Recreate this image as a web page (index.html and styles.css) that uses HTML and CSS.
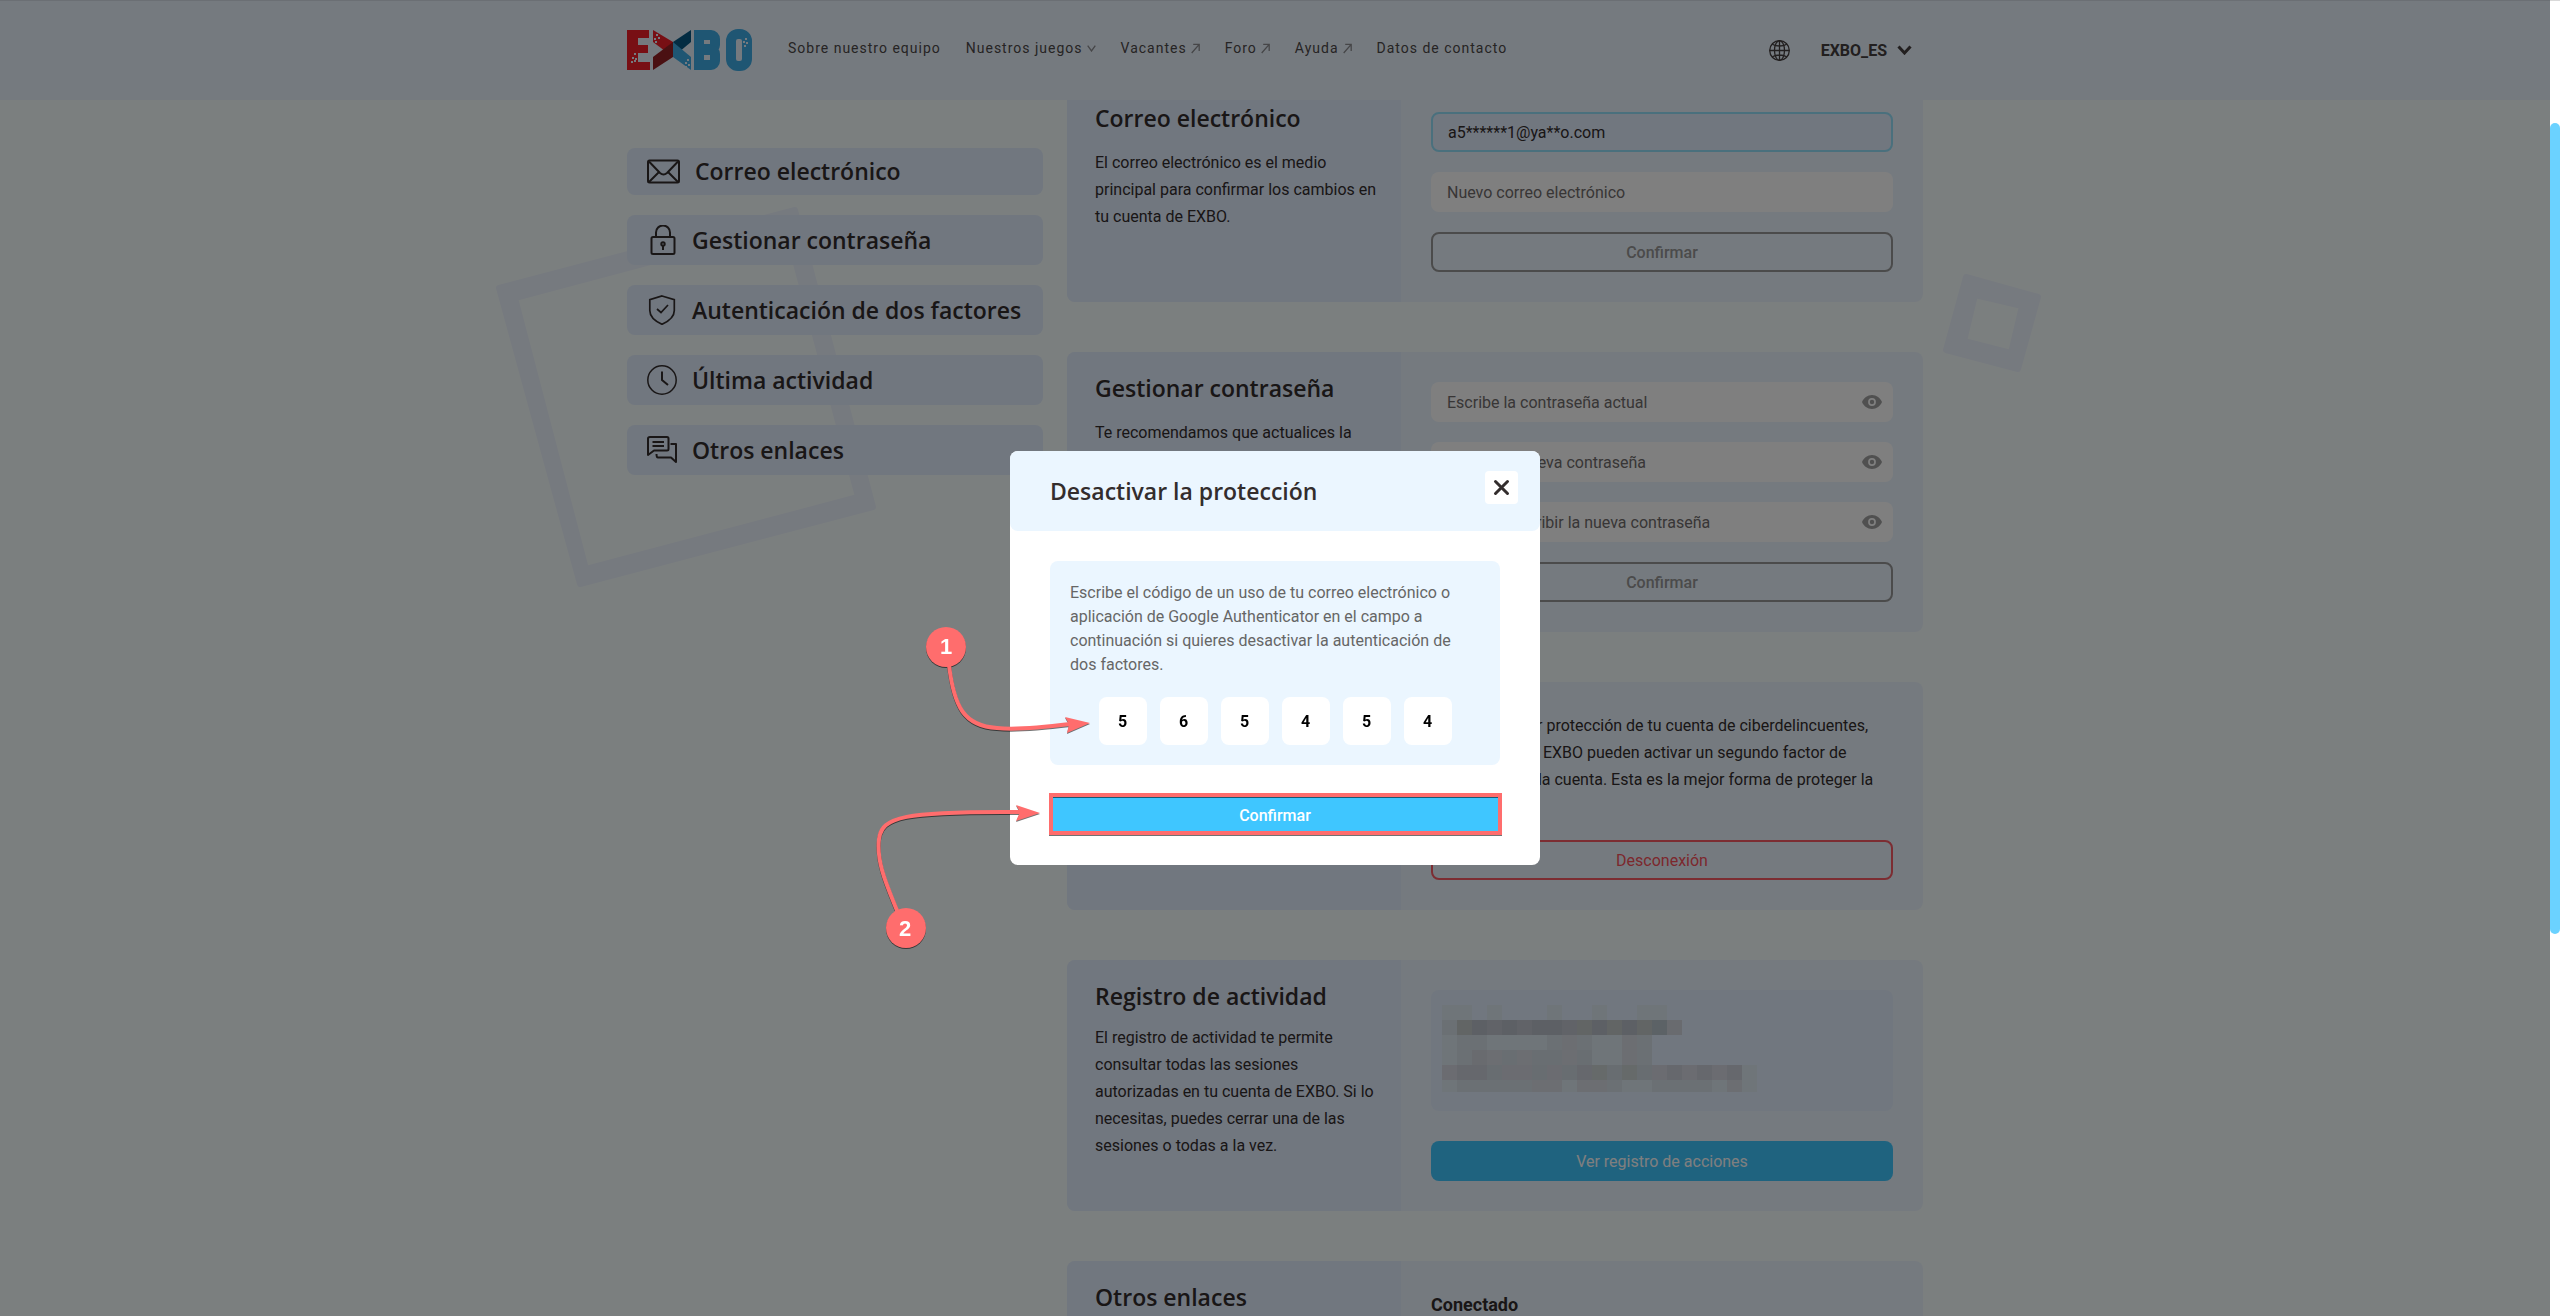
FILE: index.html
```html
<!DOCTYPE html>
<html lang="es">
<head>
<meta charset="utf-8">
<meta name="viewport" content="width=device-width, initial-scale=1">
<title>EXBO: configuración de la cuenta</title>
<link rel="stylesheet" href="styles.css">
</head>
<body>

<svg class="sprite" aria-hidden="true">
  <symbol id="ext" viewBox="0 0 9 11"><path d="M.7 10 8 1.6M2.2 1.4H8.2V8" fill="none" stroke="currentColor" stroke-width="1.3"/></symbol>
  <symbol id="eye" viewBox="0 0 20 14"><path fill-rule="evenodd" d="M10 0C5.500 0 1.700 2.900 0 7c1.700 4.100 5.500 7 10 7s8.300-2.900 10-7c-1.700-4.100-5.500-7-10-7Zm0 10.900A3.900 3.900 0 1 1 10 3.100a3.900 3.900 0 0 1 0 7.800Zm0-6.100a2.200 2.200 0 1 0 0 4.400 2.200 2.200 0 0 0 0-4.400Z" fill="currentColor"/></symbol>
</svg>

<header class="header">
  <div class="header-inner">
    <a class="logo" href="#" aria-label="EXBO">
      <svg width="125" height="42" viewBox="0 0 125 42">
        <g fill="#f01e28">
          <rect x="0" y="1" width="11" height="40"/><rect x="0" y="1" width="22" height="8"/><rect x="0" y="16" width="21" height="8"/><rect x="0" y="33" width="23" height="8"/>
          <path d="M26 1 46 13V28L26 13Z"/>
        </g>
        <path d="M64 1 46 13V28L64 13Z" fill="#065884"/>
        <path d="M26 41V28L46 13V28Z" fill="#942024"/>
        <path d="M64 41V28L46 13V28Z" fill="#3eace6"/>
        <rect x="72" y="6" width="16" height="14" rx="4" fill="none" stroke="#3eace6" stroke-width="10"/>
        <rect x="72" y="21" width="16" height="15" rx="4" fill="none" stroke="#3eace6" stroke-width="10"/>
        <rect x="67" y="1" width="9" height="40" fill="#3eace6"/>
        <rect x="104" y="5" width="16" height="32" rx="7" fill="none" stroke="#3eace6" stroke-width="10"/>
        <g fill="#ebf5ff">
          <rect x="7" y="24" width="2" height="2"/><rect x="5" y="28" width="2" height="2"/><rect x="8" y="29" width="2" height="2"/><rect x="4" y="32" width="2" height="2"/><rect x="7" y="31" width="2" height="2"/>
          <rect x="29" y="5" width="2" height="2"/><rect x="27" y="9" width="2" height="2"/><rect x="31" y="8" width="2" height="2"/><rect x="28" y="12" width="2" height="2"/>
          <rect x="60" y="30" width="2" height="2"/><rect x="58" y="33" width="2" height="2"/><rect x="61" y="35" width="2" height="2"/><rect x="58" y="37" width="2" height="2"/>
          <rect x="118" y="9" width="2" height="2"/><rect x="116" y="12" width="2" height="2"/><rect x="119" y="13" width="2" height="2"/><rect x="117" y="16" width="2" height="2"/>
        </g>
      </svg>
    </a>
    <nav class="nav">
      <a href="#">Sobre nuestro equipo</a>
      <a href="#">Nuestros juegos <svg width="9" height="7" viewBox="0 0 9 7"><path d="M.7.7 4.500 6 8.300.7" fill="none" stroke="currentColor" stroke-width="1.300"/></svg></a>
      <a href="#">Vacantes <svg width="9" height="11"><use href="#ext"/></svg></a>
      <a href="#">Foro <svg width="9" height="11"><use href="#ext"/></svg></a>
      <a href="#">Ayuda <svg width="9" height="11"><use href="#ext"/></svg></a>
      <a href="#">Datos de contacto</a>
    </nav>
    <div class="account">
      <button class="plain" type="button" aria-label="Idioma">
        <svg width="21" height="21" viewBox="0 0 21 21" fill="none" stroke="currentColor" stroke-width="1.300"><circle cx="10.500" cy="10.500" r="9.800"/><ellipse cx="10.500" cy="10.500" rx="5" ry="9.800"/><path d="M10.500.7v19.600M.7 10.500h19.600M3.300 4.200c4 2.400 10.400 2.400 14.400 0M3.300 16.800c4-2.400 10.400-2.400 14.400 0"/></svg>
      </button>
      <button class="plain user" type="button">EXBO_ES
        <svg width="15" height="10" viewBox="0 0 15 10"><path d="M1.500 1.500 7.500 8 13.500 1.500" fill="none" stroke="currentColor" stroke-width="3"/></svg>
      </button>
    </div>
  </div>
</header>

<main class="page">
  <svg class="decor" width="1550" height="700" viewBox="495 0 1550 700" aria-hidden="true">
    <path fill-rule="evenodd" stroke-linejoin="round" d="M499 288 795 210 873 507 580 584ZM515 298 586 569 858 497 786 226Z"/>
    <path fill-rule="evenodd" stroke-linejoin="round" d="M1953 277 2038 298 2018 369 1947 350Z" visibility="hidden"/>
    <path fill-rule="evenodd" stroke-linejoin="round" d="M1966 277 2038 297 2018 369 1946 350ZM1975 295 1964 341 2011 353 2022 306Z"/>
  </svg>

  <nav class="side">
    <a href="#correo"><svg width="33" height="25" viewBox="0 0 33 25"><g fill="none" stroke="currentColor" stroke-width="2" stroke-linejoin="round"><rect x="1" y="1.500" width="31" height="22" rx="1.500"/><path d="M2 2.500 13 14q3.500 3 7 0L31 2.500M2 23 12 13M31 23 21 13"/></g></svg>Correo electrónico</a>
    <a href="#contrasena"><svg width="30" height="30" viewBox="0 0 30 30"><g fill="none" stroke="currentColor" stroke-width="2"><rect x="4.500" y="12" width="23" height="17" rx="1.500"/><path d="M9 12V7.500a7 7 0 0 1 14 0V12"/><circle cx="16" cy="19" r="1.700"/><path d="M16 20v5"/></g></svg>Gestionar contraseña</a>
    <a href="#factores"><svg width="30" height="30" viewBox="0 0 30 30"><g fill="none" stroke="currentColor" stroke-width="1.700"><path d="M15 1 27.300 4.700V15.500c0 6-5 10.500-12.300 13.800C7.700 26 2.800 21.500 2.800 15.500V4.700Z"/><path d="m10 14 4 3.500 7-7.500"/></g></svg>Autenticación de dos factores</a>
    <a href="#actividad"><svg width="30" height="30" viewBox="0 0 30 30"><g fill="none" stroke="currentColor" stroke-width="1.500"><circle cx="15" cy="15" r="14.200"/><path d="M15 6.500V15l6 5" stroke-width="2"/></g></svg>Última actividad</a>
    <a href="#enlaces"><svg width="30" height="30" viewBox="0 0 30 30"><g fill="none" stroke="currentColor" stroke-width="2" stroke-linejoin="round"><path d="M3 2h17q1.500 0 1.500 1.500V14q0 1.500-1.500 1.500H7L1 20V3.500Q1 2 3 2Z"/><path d="M5.500 7H17M5.500 11H17M23.500 9H29v18l-5-4.500H11Q9.500 22.500 9.500 19"/></g></svg>Otros enlaces</a>
  </nav>

  <div class="cards">
    <section class="card" id="correo">
      <div class="about">
        <h2>Correo electrónico</h2>
        <p>El correo electrónico es el medio principal para confirmar los cambios en tu cuenta de EXBO.</p>
      </div>
      <form class="fields">
        <input class="field current" type="text" value="a5******1@ya**o.com" aria-label="Correo electrónico actual" readonly>
        <input class="field" type="text" placeholder="Nuevo correo electrónico" aria-label="Nuevo correo electrónico">
        <button class="btn idle" type="button">Confirmar</button>
      </form>
    </section>

    <section class="card" id="contrasena">
      <div class="about">
        <h2>Gestionar contraseña</h2>
        <p>Te recomendamos que actualices la contraseña periódicamente.</p>
      </div>
      <form class="fields">
        <div class="secret"><input class="field" type="password" placeholder="Escribe la contraseña actual" aria-label="Contraseña actual"><button class="plain" type="button" aria-label="Mostrar"><svg width="20" height="14"><use href="#eye"/></svg></button></div>
        <div class="secret"><input class="field" type="password" placeholder="Escribe la nueva contraseña" aria-label="Nueva contraseña"><button class="plain" type="button" aria-label="Mostrar"><svg width="20" height="14"><use href="#eye"/></svg></button></div>
        <div class="secret"><input class="field" type="password" placeholder="Vuelve a escribir la nueva contraseña" aria-label="Repetir la nueva contraseña"><button class="plain" type="button" aria-label="Mostrar"><svg width="20" height="14"><use href="#eye"/></svg></button></div>
        <button class="btn idle" type="button">Confirmar</button>
      </form>
    </section>

    <section class="card" id="factores">
      <div class="about">
        <h2>Autenticación de dos factores</h2>
      </div>
      <div class="fields">
        <p>Para una mayor protección de tu cuenta de ciberdelincuentes,<br>los usuarios de EXBO pueden activar un segundo factor de<br>verificación en la cuenta. Esta es la mejor forma de proteger la<br>cuenta.</p>
        <button class="btn danger" type="button">Desconexión</button>
      </div>
    </section>

    <section class="card" id="actividad">
      <div class="about snug">
        <h2>Registro de actividad</h2>
        <p>El registro de actividad te permite consultar todas las sesiones autorizadas en tu cuenta de EXBO. Si lo necesitas, puedes cerrar una de las sesiones o todas a la vez.</p>
      </div>
      <div class="fields wide-gap">
        <div class="session">
          <svg width="315" height="87" viewBox="0 0 315 87" shape-rendering="crispEdges" role="img" aria-label="Sesión oculta">
            <g fill="#deeaf3"><path d="M0 0h30v15H0zM45 0h15v15H45zM105 0h15v15h-15zM150 0h15v15h-15zM195 0h30v15h-30zM0 30h210v30H0zM0 75h300v12H0zM300 60h15v27h-15z"/></g>
            <path fill="#d6e1e9" d="M0 15h15v15H0zM15 30h30v15H15zM105 30h15v15h-15zM135 30h15v30h-15zM195 30h15v30h-15zM15 45h15v15H15zM15 75h90v12H15zM165 75h15v12h-15zM210 75h60v12h-60z"/>
            <path fill="#d8dce5" d="M120 30h15v30h-15zM180 30h15v30h-15zM75 45h15v15H75zM45 45h15v15H45zM90 75h30v12H90zM135 75h30v12h-30zM285 75h15v12h-15z"/>
            <path fill="#d2d6df" d="M30 45h15v15H30zM225 15h15v15h-15z"/>
            <path fill="#d2dde5" d="M60 45h15v15H60zM90 45h30v15H90zM135 45h15v15h-15z"/>
            <path fill="#c2c6d1" d="M45 15h90v15H45z"/>
            <path fill="#bbc0ca" d="M30 15h15v15H30zM60 15h15v15H60zM90 15h30v15H90zM150 15h15v15h-15zM180 15h15v15h-15z"/>
            <path fill="#c5cacb" d="M15 15h15v15H15zM135 15h15v15h-15zM165 15h15v15h-15zM195 15h15v15h-15z"/>
            <path fill="#b8c4cc" d="M210 15h15v15h-15z"/>
            <path fill="#d6d9e3" d="M0 60h300v15H0z"/>
            <path fill="#d0dbe3" d="M45 60h15v15H45zM90 60h15v15H90zM120 60h15v15h-15zM165 60h15v15h-15zM195 60h15v15h-15z"/>
            <path fill="#cdd0da" d="M15 60h15v15H15zM30 60h15v15H30zM135 60h15v15h-15zM225 60h15v15h-15zM255 60h15v15h-15zM285 60h15v15h-15z"/>
            <path fill="#cdd5d5" d="M150 60h15v15h-15zM180 60h15v15h-15z"/>
          </svg>
        </div>
        <button class="btn primary" type="button">Ver registro de acciones</button>
      </div>
    </section>

    <section class="card" id="enlaces">
      <div class="about">
        <h2>Otros enlaces</h2>
      </div>
      <div class="fields">
        <h3>Conectado</h3>
      </div>
    </section>
  </div>
</main>

<div class="backdrop">
  <div class="modal" role="dialog" aria-modal="true" aria-labelledby="modal-title">
    <div class="modal-head">
      <h2 id="modal-title">Desactivar la protección</h2>
      <button class="close" type="button" aria-label="Cerrar"><svg width="17" height="17" viewBox="0 0 17 17"><path d="M2.500 2.500l12 12M14.500 2.500l-12 12" stroke="currentColor" stroke-width="3" stroke-linecap="round"/></svg></button>
    </div>
    <form class="modal-body">
      <div class="code-box">
        <p>Escribe el código de un uso de tu correo electrónico o aplicación de Google Authenticator en el campo a continuación si quieres desactivar la autenticación de dos factores.</p>
        <div class="digits">
          <input type="text" value="5" aria-label="Dígito 1">
          <input type="text" value="6" aria-label="Dígito 2">
          <input type="text" value="5" aria-label="Dígito 3">
          <input type="text" value="4" aria-label="Dígito 4">
          <input type="text" value="5" aria-label="Dígito 5">
          <input type="text" value="4" aria-label="Dígito 6">
        </div>
      </div>
      <button class="btn bright" type="button">Confirmar</button>
    </form>
    <!-- Step markers that lie over the dialog -->
    <svg class="steps" width="530" height="414" viewBox="0 0 530 414">
      <rect x="41" y="344" width="449" height="38" fill="none" stroke="#ff6d6d" stroke-width="4"/>
      <g fill="none" stroke="#ff6d6d" stroke-width="4">
        <path d="M-61 214C-56 256-46 275-13 277C6 279 36 276 60 273"/>
        <path d="M-112 462C-122 437-134 412-131 388C-128 366-108 360 12 361"/>
      </g>
      <path fill="#ff6d6d" d="M80 272 55 266 59 273 57 282ZM30 362 6 354 10 361 6 370Z"/>
      <circle cx="-64" cy="196" r="20" fill="#ff6d6d"/>
      <circle cx="-104" cy="477" r="20" fill="#ff6d6d"/>
      <text x="-64" y="203">1</text>
      <text x="-105" y="485">2</text>
    </svg>
  </div>
</div>

<div class="track" aria-hidden="true"><div class="thumb"></div></div>

</body>
</html>
```
FILE: styles.css
```css
* { box-sizing: border-box; }

/* the custom scrollbar takes 10px on the right */
body {
  margin: 0;
  padding-right: 10px;
  height: 100vh;
  overflow: hidden;
  background: #f7fffe;
  color: #332d2d;
  font: 400 16px/27px Roboto, "Liberation Sans", sans-serif;
}

h2, h3, p { margin: 0; }
h2 { font: 600 23px/32px "Open Sans", "Noto Sans", sans-serif; }
h3 { font-size: 18px; font-weight: 700; line-height: 27px; }
svg { display: block; flex: none; }
button, input { font: inherit; color: inherit; }
.sprite { position: absolute; width: 0; height: 0; }

.plain {
  display: flex;
  padding: 0;
  border: 0;
  background: none;
}

/* Header */
.header {
  position: fixed;
  inset: 0 10px auto 0;
  z-index: 2;
  height: 100px;
  border-top: 1px solid #d6dfe8;
  background: #ebf5ff;
}
.header-inner {
  display: flex;
  align-items: center;
  max-width: 1296px;
  height: 98px;
  margin: 0 auto;
}
.nav {
  display: flex;
  gap: 25px;
  margin-left: 36px;
  padding-bottom: 4px;
  font-size: 14px;
  letter-spacing: 1px;
}
.nav a {
  display: flex;
  align-items: center;
  gap: 4px;
  color: #4d4848;
  text-decoration: none;
}
.nav svg { color: #8c8c90; }
.account {
  display: flex;
  align-items: center;
  gap: 31px;
  margin-left: auto;
  padding-right: 11px;
  color: #443e3e;
}
.user {
  align-items: center;
  gap: 10px;
  font-weight: 700;
}

/* Page grid */
.page {
  position: relative;
  display: grid;
  grid-template-columns: 416px minmax(0, 1fr);
  gap: 24px;
  align-items: start;
  max-width: 1296px;
  margin: 0 auto;
  padding-top: 82px;
}
.decor {
  position: absolute;
  top: 0;
  left: -132px;
  fill: #edf4ff;
  stroke: #edf4ff;
  stroke-width: 6px;
}

.side {
  position: relative;
  display: grid;
  gap: 20px;
  padding-top: 66px;
}
.side a {
  display: flex;
  align-items: center;
  gap: 15px;
  padding: 10px 20px;
  border-radius: 8px;
  background: #e2eeff;
  color: inherit;
  font: 600 23px/27px "Open Sans", "Noto Sans", sans-serif;
  text-decoration: none;
}

.cards { position: relative; display: grid; gap: 50px; }
.card {
  display: grid;
  grid-template-columns: 334px minmax(0, 1fr);
  border-radius: 8px;
  background: #ebf5ff;
  overflow: hidden;
}
.about {
  display: grid;
  gap: 15px;
  align-content: start;
  padding: 20px 20px 30px 28px;
  background: #e2eeff;
}
.about.snug { gap: 12px; }
.fields {
  display: grid;
  gap: 20px;
  align-content: start;
  padding: 30px;
}
.fields.wide-gap { gap: 30px; }

/* Controls */
.field {
  width: 100%;
  height: 40px;
  padding: 0 16px;
  border: 0;
  border-radius: 8px;
  background: #fff;
}
.field::placeholder { color: #706c6c; opacity: 1; }
.field.current {
  padding: 0 15px;
  border: 2px solid #94e0fb;
  background: #e2eeff;
}
.secret { position: relative; }
.secret .plain {
  position: absolute;
  top: 13px;
  right: 11px;
  color: #a0a0a0;
}
.btn {
  width: 100%;
  height: 40px;
  padding: 0;
  border: 2px solid transparent;
  border-radius: 8px;
  background: none;
}
.btn.idle { border-color: #969696; color: #969696; font-weight: 500; }
.btn.danger { border-color: #f85a64; color: #f8505a; }
.btn.primary { background: #3fc6ff; border: 0; color: #fff; }
.btn.bright { background: #3fc6ff; border: 0; border-radius: 0; color: #fff; font-weight: 500; }

.session {
  padding: 15px 11px 19px;
  border-radius: 8px;
  background: #e2eeff;
}

/* Dialog */
.backdrop {
  position: fixed;
  inset: 0 10px 0 0;
  z-index: 3;
  display: grid;
  place-items: center;
  background: rgba(0, 0, 0, .5);
}
.modal {
  position: relative;
  width: 530px;
  border-radius: 8px;
  background: #fff;
}
.modal-head {
  display: flex;
  align-items: flex-start;
  justify-content: space-between;
  padding: 20px 22px 20px 40px;
  border-radius: 8px;
  background: #ebf6ff;
}
.modal-head h2 { line-height: 40px; }
.close {
  display: grid;
  place-items: center;
  width: 33px;
  height: 33px;
  padding: 0;
  border: 0;
  border-radius: 4px;
  background: #fff;
}
.modal-body {
  display: grid;
  gap: 30px;
  padding: 30px 40px;
}
.code-box {
  display: grid;
  gap: 20px;
  padding: 20px;
  border-radius: 8px;
  background: #ebf6ff;
  color: #666;
  line-height: 24px;
}
.digits {
  display: flex;
  justify-content: center;
  gap: 13px;
}
.digits input {
  width: 48px;
  height: 48px;
  padding: 0;
  border: 0;
  border-radius: 8px;
  background: #fff;
  color: #000;
  font-weight: 700;
  text-align: center;
}
.steps {
  position: absolute;
  top: 0;
  left: 0;
  overflow: visible;
  pointer-events: none;
  filter: drop-shadow(0 1px 0 rgba(0, 0, 0, .55));
}
.steps text {
  fill: #fff;
  font: 700 22px "Liberation Sans", Arial, sans-serif;
  text-anchor: middle;
}

/* Page scrollbar */
.track {
  position: fixed;
  inset: 0 0 0 auto;
  z-index: 4;
  width: 10px;
  padding-top: 122px;
  border-top: 1px solid #d9d9d9;
  background: #fff;
}
.thumb {
  height: 68%;
  border-radius: 5px;
  background: #6bd2ff;
}
```
